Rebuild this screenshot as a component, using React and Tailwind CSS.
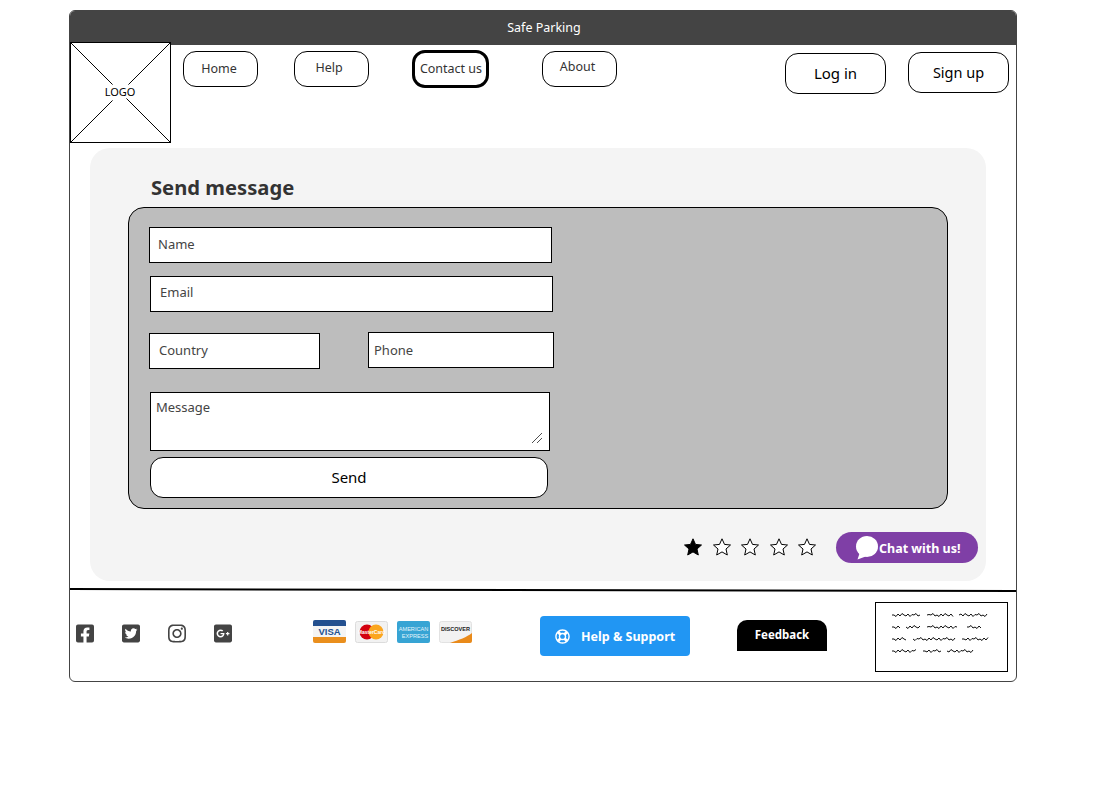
import { FaFacebookSquare, FaTwitterSquare, FaInstagram, FaGooglePlusSquare, FaRegLifeRing } from "react-icons/fa";

const navItems = [
  { label: "Home", className: "ml-[12px] mt-[6px] w-[75px] h-[36px] pr-[3px]" },
  { label: "Help", className: "ml-[36px] mt-[6px] w-[75px] h-[36px] pb-[2px] pr-[5px]" },
  { label: "Contact us", className: "ml-[43px] mt-[5px] w-[77px] h-[38px] border-[3px] border-black pl-[1px]" },
  { label: "About", className: "ml-[53px] mt-[6px] w-[75px] h-[36px] pb-[4px] pr-[4px]" }
];

const socialIcons = [FaFacebookSquare, FaTwitterSquare, FaInstagram, FaGooglePlusSquare];

// start/end x of each scribbled word, one row per line of the text block
const scribbleRows = [
  [[0, 28], [35, 61], [67, 95]],
  [[0, 8], [14, 28], [35, 65], [75, 90]],
  [[0, 15], [21, 63], [70, 96]],
  [[0, 25], [31, 49], [55, 81]]
];

const jag = [0, 1.5, -1, 1, -1.5, 0, 1, -1, 1.5, -0.5, 0, -1.5, 1];

function scribblePath(y, [from, to]) {
  let d = `M${from} ${y}`;
  for (let x = from + 2, i = from; x <= to; x += 2, i += 1) {
    d += ` L${x} ${y + jag[i % jag.length]}`;
  }
  return d;
}

function PaymentCards() {
  return (
    <div className="flex gap-[9px] ml-[81px] mt-[28px] h-[24px]">
      <svg width="33" height="23" viewBox="0 0 33 23">
        <rect width="33" height="23" rx="2" fill="#f4f4f4" />
        <path d="M0 6V2a2 2 0 0 1 2-2h29a2 2 0 0 1 2 2v4z" fill="#23508f" />
        <path d="M0 17h33v4a2 2 0 0 1-2 2H2a2 2 0 0 1-2-2z" fill="#ea8f1d" />
        <text x="16.5" y="15" textAnchor="middle" fontSize="9.5" fontWeight="700" fill="#23508f" fontFamily="Liberation Sans, sans-serif">VISA</text>
      </svg>
      <svg width="33" height="22" viewBox="0 0 33 22" className="mt-[1px]">
        <rect x="0.5" y="0.5" width="32" height="21" rx="2" fill="#f2f2f2" stroke="#dcdcdc" />
        <circle cx="12" cy="11" r="7.5" fill="#d3000f" />
        <circle cx="21" cy="11" r="7.5" fill="#fba61f" />
        <text x="16.5" y="13" textAnchor="middle" fontSize="5" fontWeight="700" fill="#fff" fontFamily="Liberation Sans, sans-serif">MasterCard</text>
      </svg>
      <svg width="33" height="22" viewBox="0 0 33 22" className="mt-[1px]">
        <rect width="33" height="22" rx="2" fill="#37a4d4" />
        <text x="16.5" y="10" textAnchor="middle" fontSize="5.6" fill="#e4f4fb" fontFamily="Liberation Sans, sans-serif">AMERICAN</text>
        <text x="18" y="17" textAnchor="middle" fontSize="5.6" fill="#e4f4fb" fontFamily="Liberation Sans, sans-serif">EXPRESS</text>
      </svg>
      <svg width="33" height="22" viewBox="0 0 33 22" className="mt-[1px]">
        <rect x="0.5" y="0.5" width="32" height="21" rx="2" fill="#f2f2f2" stroke="#e2e2e2" />
        <path d="M11 22 C20 19 28 16 33 12 V20 a2 2 0 0 1-2 2z" fill="#e98a1a" />
        <text x="16.5" y="10" textAnchor="middle" fontSize="5.6" fontWeight="700" fill="#222" fontFamily="Liberation Sans, sans-serif">DISCOVER</text>
      </svg>
    </div>
  );
}

function RatingStar({ filled }) {
  return (
    <svg width="18" height="18" viewBox="0 0 18 18">
      <polygon
        points="9,0.8 11.5,6.4 17.5,7 13,11 14.3,17 9,13.9 3.7,17 5,11 0.5,7 6.5,6.4"
        fill={filled ? "#000" : "#fff"}
        stroke="#000"
        strokeWidth="1"
      />
    </svg>
  );
}

function FieldInput({ placeholder, className }) {
  return (
    <input
      placeholder={placeholder}
      className={`block h-[36px] bg-white border border-black text-[13px] text-[#333] placeholder:text-[#444] outline-none ${className}`}
    />
  );
}

export default function App() {
  return (
    <div className="h-[790px] w-[1108px] bg-white pt-[10px] pl-[69px] font-['Noto_Sans',sans-serif] text-[#333] overflow-hidden">
      <div className="w-[948px] h-[672px] border border-[#444] rounded-[6px] overflow-hidden">
        <header className="h-[34px] bg-[#444] text-white text-[12.5px] text-center leading-[33px] pl-[2px]">Safe Parking</header>

        <div className="flex h-[103px]">
          <div className="relative z-10 -mt-[3px] w-[101px] h-[101px] border border-black bg-white shrink-0">
            <svg className="absolute inset-0 w-full h-full" viewBox="0 0 100 100" preserveAspectRatio="none">
              <path d="M0 0 L42 42 M56 56 L100 100 M100 0 L58 42 M42 58 L0 100" stroke="#000" strokeWidth="1" fill="none" />
            </svg>
            <span className="absolute inset-0 flex items-center justify-center pr-[1px] text-[11px] text-black">LOGO</span>
          </div>
          {navItems.map((item) => (
            <button
              key={item.label}
              className={`flex items-center justify-center rounded-[13px] border border-black bg-white text-[12.5px] whitespace-nowrap ${item.className}`}
            >
              {item.label}
            </button>
          ))}
          <button className="ml-[168px] mt-[8px] w-[101px] h-[41px] rounded-[13px] border border-black bg-white text-[15px] text-black">Log in</button>
          <button className="ml-[22px] mt-[7px] w-[101px] h-[41px] rounded-[13px] border border-black bg-white text-[14.5px] text-black">Sign up</button>
        </div>

        <main className="ml-[20px] w-[896px] h-[433px] rounded-[20px] bg-[#f4f4f4] pt-[24px]">
          <h1 className="ml-[61px] h-[35px] text-[20.2px] leading-[31px] font-bold">Send message</h1>
          <div className="ml-[38px] w-[820px] h-[302px] rounded-[16px] border border-black bg-[#bdbdbd] pt-[19px] pl-[20px]">
            <FieldInput placeholder="Name" className="w-[403px] pl-[8px] pb-[2px]" />
            <FieldInput placeholder="Email" className="ml-[1px] mt-[13px] w-[403px] pl-[9px] pb-[4px]" />
            <div className="flex mt-[20px]">
              <FieldInput placeholder="Country" className="mt-[1px] w-[171px] pl-[9px] pb-[2px]" />
              <FieldInput placeholder="Phone" className="ml-[48px] w-[186px] pl-[5px]" />
            </div>
            <div className="relative ml-[1px] mt-[23px] w-[400px] h-[59px]">
              <textarea
                placeholder="Message"
                className="block w-full h-full resize-none bg-white border border-black text-[13px] leading-[17px] pl-[5px] pt-[6px] placeholder:text-[#444] outline-none"
              />
              <svg className="absolute right-[8px] bottom-[8px]" width="10" height="10" viewBox="0 0 10 10">
                <path d="M0 10 L10 0 M5 10 L10 5" stroke="#222" strokeWidth="0.8" fill="none" />
              </svg>
            </div>
            <button className="block ml-[1px] mt-[6px] w-[398px] h-[41px] rounded-[13px] border border-black bg-white text-[15px] text-black">Send</button>
          </div>
          <div className="flex items-center mt-[23px] h-[31px]">
            <div className="flex items-center gap-[10.5px] ml-[594px] -mt-[1px]">
              <RatingStar filled />
              {[0, 1, 2, 3].map((i) => (
                <RatingStar key={i} />
              ))}
            </div>
            <button className="ml-[20px] w-[142px] h-[31px] rounded-full bg-[#7f3fa6] text-white text-[12.5px] font-bold flex items-center pl-[19px]">
              <svg className="mr-[1px] shrink-0" width="23" height="24" viewBox="0 0 23 24">
                <ellipse cx="12" cy="10.5" rx="11" ry="10.5" fill="#fff" />
                <path d="M5 16 L2.5 23.5 L12 20 Z" fill="#fff" />
              </svg>
              <span className="pt-[3px]">Chat with us!</span>
            </button>
          </div>
        </main>

        <svg className="block mt-[7px]" width="946" height="4" viewBox="0 0 946 4">
          <line x1="0" y1="1" x2="946" y2="3" stroke="#000" strokeWidth="2" />
        </svg>

        <footer className="flex">
          <div className="flex gap-[28px] ml-[6px] mt-[31px] h-[21px]">
            {socialIcons.map((Icon, i) => (
              <Icon key={i} className="w-[18px] h-[21px] text-[#444]" />
            ))}
          </div>
          <PaymentCards />
          <button className="ml-[68px] mt-[24px] w-[150px] h-[40px] rounded-[4px] bg-[#2196f3] text-white text-[12.5px] font-bold flex items-center pl-[15px]">
            <FaRegLifeRing className="text-[15px] mr-[11px]" />
            <span className="pt-[2px]">Help &amp; Support</span>
          </button>
          <button className="ml-[47px] mt-[28px] w-[90px] h-[31px] rounded-t-[10px] bg-black text-white text-[11.5px] font-bold pb-[2px]">Feedback</button>
          <div className="ml-[48px] mt-[10px] w-[133px] h-[70px] border border-black pl-[16px] pt-[9px]">
            <svg width="100" height="44" viewBox="0 0 100 44">
              {scribbleRows.map((row, r) =>
                row.map((word) => (
                  <path key={`${r}-${word[0]}`} d={scribblePath(3 + r * 12, word)} fill="none" stroke="#111" strokeWidth="1" />
                ))
              )}
            </svg>
          </div>
        </footer>
      </div>
    </div>
  );
}
